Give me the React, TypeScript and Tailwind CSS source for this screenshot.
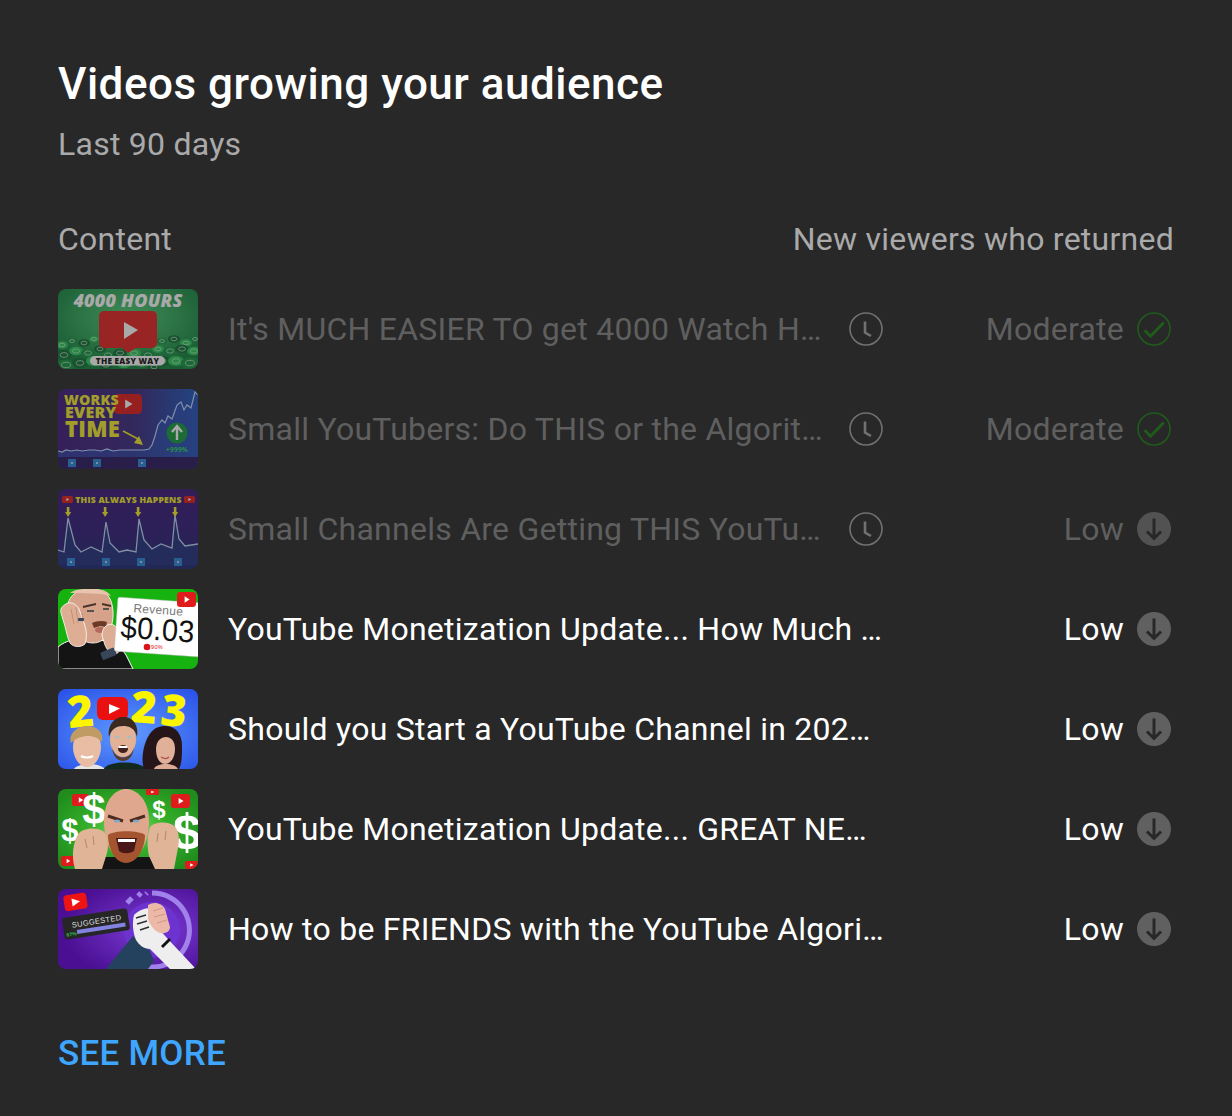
import type { ReactNode } from "react";

type Status = "Moderate" | "Low";

type Video = {
  title: string;
  status: Status;
  pending?: boolean;
  thumb: ReactNode;
};

const thumbFont = "'Open Sans', 'Liberation Sans', sans-serif";

function YtButton({ x, y, w, h }: { x: number; y: number; w: number; h: number }) {
  return (
    <g>
      <rect x={x} y={y} width={w} height={h} rx={h * 0.22} fill="#e01b1b" />
      <polygon
        points={`${x + w * 0.4},${y + h * 0.28} ${x + w * 0.66},${y + h * 0.5} ${x + w * 0.4},${y + h * 0.72}`}
        fill="#fff"
      />
    </g>
  );
}

function Dollar({ x, y, size }: { x: number; y: number; size: number }) {
  return (
    <text x={x} y={y} fontSize={size} fontWeight={700} fill="#fff" textAnchor="middle" fontFamily="'Liberation Sans', sans-serif">
      $
    </text>
  );
}

function Thumb4000() {
  const coins = [
    [4, 56, 6], [14, 52, 5], [26, 54, 6], [36, 50, 5], [104, 52, 5], [116, 50, 6], [128, 54, 6], [137, 50, 5],
    [6, 66, 8], [18, 62, 7], [30, 64, 7], [42, 60, 6], [100, 60, 6], [112, 62, 7], [124, 60, 7], [136, 62, 7],
    [8, 76, 9], [22, 74, 8], [36, 72, 8], [50, 66, 7], [62, 64, 7], [76, 64, 7], [90, 66, 7], [104, 72, 8], [118, 72, 8],
    [132, 74, 9], [48, 76, 7], [66, 75, 7], [84, 75, 7], [96, 78, 6],
  ];
  return (
    <svg viewBox="0 0 140 80" className="h-full w-full">
      <defs>
        <radialGradient id="g4000" cx="50%" cy="35%" r="65%">
          <stop offset="0%" stopColor="#4fd078" />
          <stop offset="100%" stopColor="#12803c" />
        </radialGradient>
      </defs>
      <rect width="140" height="80" fill="url(#g4000)" />
      <text x="70" y="18" fontSize="18" fontWeight={800} fontStyle="italic" fill="#fff" textAnchor="middle" fontFamily={thumbFont}>
        4000 HOURS
      </text>
      {coins.map(([x, y, r], i) => (
        <g key={i}>
          <ellipse cx={x} cy={y} rx={r} ry={r * 0.62} fill={i % 3 === 0 ? "#2ac95a" : i % 3 === 1 ? "#159443" : "#0f6f33"} />
          <ellipse cx={x} cy={y} rx={r * 0.5} ry={r * 0.3} fill="none" stroke="#c8ecd0" strokeWidth="0.7" />
        </g>
      ))}
      <path d="M46 22h48a5 5 0 0 1 5 5v27a5 5 0 0 1-5 5H78l-8 5-6-5H46a5 5 0 0 1-5-5V27a5 5 0 0 1 5-5z" fill="#e32222" />
      <polygon points="66,33 80,41 66,50" fill="#fff" />
      <rect x="32" y="67" width="75" height="9.5" rx="4.7" fill="#fff" />
      <text x="69.5" y="75" fontSize="8.2" fontWeight={800} fill="#111" textAnchor="middle" fontFamily={thumbFont}>
        THE EASY WAY
      </text>
    </svg>
  );
}

function ThumbWorks() {
  return (
    <svg viewBox="0 0 140 80" className="h-full w-full">
      <defs>
        <linearGradient id="gWorks" x1="0" x2="1" y1="0" y2="0">
          <stop offset="0%" stopColor="#401a7c" />
          <stop offset="55%" stopColor="#3a2a80" />
          <stop offset="100%" stopColor="#1f57bd" />
        </linearGradient>
      </defs>
      <rect width="140" height="80" fill="url(#gWorks)" />
      <rect y="68" width="140" height="12" fill="#2a1660" />
      <path d="M0 62l4 1 4-2 5 1 6-1 5 1 7-1 6 0 6 1 6-2 6 2 7-1 9 0 8 0 7 0 5-1 3-4 3-9 3-11 4-5 3 3 3-7 4 3 5-14 4-3 3 8 3-5 4 3 4-16 3 3 3-4 2-4V68H0z" fill="#2b4fb8" opacity="0.6" />
      <path d="M0 62l4 1 4-2 5 1 6-1 5 1 7-1 6 0 6 1 6-2 6 2 7-1 9 0 8 0 7 0 5-1 3-4 3-9 3-11 4-5 3 3 3-7 4 3 5-14 4-3 3 8 3-5 4 3 4-16 3 3 3-4 2-4" fill="none" stroke="#b9d4ff" strokeWidth="1.2" />
      <YtButton x={56} y={5} w={28} h={20} />
      <g fontFamily={thumbFont} fontWeight={800} fill="#f5ec2a">
        <text x="6" y="16" fontSize="14.2">WORKS</text>
        <text x="7" y="29" fontSize="16">EVERY</text>
        <text x="7" y="48" fontSize="22">TIME</text>
      </g>
      <path d="M65 42l17 9" stroke="#f5ec2a" strokeWidth="1.6" fill="none" />
      <polygon points="85,56 76,54 81,47" fill="#f5ec2a" />
      <circle cx="119" cy="44" r="10.5" fill="#159a3c" />
      <path d="M119 51V38M114 43l5-6 5 6" stroke="#fff" strokeWidth="2.4" fill="none" />
      <text x="119" y="63" fontSize="6.5" fontWeight={700} fill="#28d45a" textAnchor="middle" fontFamily={thumbFont}>
        +999%
      </text>
      {[10, 35, 80].map((x) => (
        <g key={x}>
          <rect x={x} y={70} width="8" height="8" fill="#2b82d9" />
          <rect x={x + 3.2} y={73.2} width="1.6" height="1.6" fill="#fff" />
        </g>
      ))}
    </svg>
  );
}

function ThumbAlways() {
  const xs = [10, 47, 80, 117];
  return (
    <svg viewBox="0 0 140 80" className="h-full w-full">
      <defs>
        <linearGradient id="gAlways" x1="0" x2="0" y1="0" y2="1">
          <stop offset="0%" stopColor="#3a1778" />
          <stop offset="55%" stopColor="#301c78" />
          <stop offset="100%" stopColor="#1c2a74" />
        </linearGradient>
      </defs>
      <rect width="140" height="80" fill="url(#gAlways)" />
      <path d="M0 61l6 2 4-34 7 27 6 7 10-5 11 5 4-30 4 21 9 9 8-2 9 2 3-33 5 21 8 9 9-5 11 4 3-33 4 24 6 7 13-2v21H0z" fill="#22307f" />
      <path d="M0 61l6 2 4-34 7 27 6 7 10-5 11 5 4-30 4 21 9 9 8-2 9 2 3-33 5 21 8 9 9-5 11 4 3-33 4 24 6 7 13-2" fill="none" stroke="#bcd0f5" strokeWidth="1.3" />
      <YtButton x={4} y={7} w={11} h={7} />
      <YtButton x={126} y={7} w={11} h={7} />
      <text x="70.5" y="14" fontSize="8.6" fontWeight={800} fill="#f5ec2a" textAnchor="middle" fontFamily={thumbFont}>
        THIS ALWAYS HAPPENS
      </text>
      {xs.map((x) => (
        <g key={x}>
          <rect x={x - 1.2} y={18} width="2.6" height="6" fill="#f5ec2a" />
          <polygon points={`${x - 3},23 ${x + 3.2},23 ${x + 0.1},28`} fill="#f5ec2a" />
        </g>
      ))}
      {[9, 44, 79, 116].map((x) => (
        <g key={x}>
          <rect x={x} y={69} width="8" height="8" fill="#2b82d9" />
          <rect x={x + 3.2} y={72.2} width="1.6" height="1.6" fill="#fff" />
        </g>
      ))}
    </svg>
  );
}

function ThumbRevenue() {
  return (
    <svg viewBox="0 0 140 80" className="h-full w-full">
      <rect width="140" height="80" fill="#16b20f" />
      <path d="M0 58c8-7 20-9 30-8l20 2c8 2 14 8 18 14l7 14H0z" fill="#141414" stroke="#fff" strokeWidth="1" />
      <path d="M9 22C9 6 20 0 33 0c14 0 21 7 22 22 1 16-6 32-20 32C19 54 9 38 9 22z" fill="#d6a38a" stroke="#fff" strokeWidth="0.8" />
      <path d="M12 4C17 0 24 0 33 0c10 0 16 1 20 7-9-3-30-3-41-3z" fill="#e8c3ad" />
      <path d="M25 18l13-3M44 15l9 2" stroke="#4a3429" strokeWidth="1.8" />
      <path d="M29 22h7M45 20h6" stroke="#2c3a40" strokeWidth="1.6" />
      <path d="M34 34c4-2 10-3 15-1l-1 5-6-1-6 2z" fill="#6d3a28" />
      <ellipse cx="42" cy="41" rx="5" ry="3" fill="#b46a5d" />
      <path d="M8 15c5-3 10 0 13 5l5 14c3 8 3 14 1 21-5 4-12 3-15-1-3-6-4-14-6-20l-3-10c-1-4 1-7 5-9z" fill="#deae94" stroke="#fff" strokeWidth="0.8" />
      <path d="M48 37c4-3 9-2 11 3l4 16c0 5-2 8-6 9-5 0-8-4-10-9l-3-9c0-4 1-8 4-10z" fill="#deae94" stroke="#fff" strokeWidth="0.8" />
      <path d="M18 18l2 16M13 20l3 15M24 24l1 9" stroke="#b5836a" strokeWidth="0.7" />
      <rect x="43" y="61" width="15" height="8" rx="1.5" transform="rotate(-22 50 65)" fill="#39465a" />
      <rect x="20" y="29" width="6" height="3" rx="1" fill="#39465a" />
      <g transform="rotate(4 100 38)">
        <rect x="58" y="11" width="90" height="54" rx="2" fill="#fff" stroke="#bbb" strokeWidth="0.5" />
      </g>
      <text x="100" y="25" fontSize="12" fill="#777" textAnchor="middle" fontFamily="'Liberation Sans', sans-serif" transform="rotate(4 100 25)">
        Revenue
      </text>
      <text x="99" y="51" fontSize="31" fill="#111" textAnchor="middle" fontFamily="'Liberation Sans', sans-serif" transform="rotate(4 99 51)" textLength="74" lengthAdjust="spacingAndGlyphs">
        $0.03
      </text>
      <circle cx="89" cy="58" r="3.3" fill="#d8141a" />
      <text x="99" y="60" fontSize="5.5" fill="#d8141a" textAnchor="middle" fontFamily="'Liberation Sans', sans-serif">
        90%
      </text>
      <YtButton x={119} y={3} w={19} h={15} />
    </svg>
  );
}

function Thumb2023() {
  return (
    <svg viewBox="0 0 140 80" className="h-full w-full">
      <defs>
        <radialGradient id="g2023" cx="50%" cy="55%" r="70%">
          <stop offset="0%" stopColor="#5f9bff" />
          <stop offset="100%" stopColor="#2a53e8" />
        </radialGradient>
      </defs>
      <rect width="140" height="80" fill="url(#g2023)" />
      <g fontFamily={thumbFont} fontWeight={800} fill="#fbf500" fontSize="44">
        <text x="10" y="38" transform="rotate(-6 22 26)">2</text>
        <text x="73" y="34" transform="rotate(4 86 20)">2</text>
        <text x="103" y="37" transform="rotate(6 115 22)">3</text>
      </g>
      <rect x="39" y="8" width="31" height="23" rx="6" fill="#ea1010" />
      <polygon points="51,15 62,19.5 51,25" fill="#fff" />
      <path d="M46 80c3-8 35-9 42 0z" fill="#12291f" />
      <path d="M16 80c2-5 22-8 30-1v1z" fill="#e4e4e4" />
      <ellipse cx="65" cy="50" rx="13" ry="18" fill="#e2b196" />
      <path d="M51 48c-2-13 7-21 15-20 9 0 15 8 13 20-2-9-8-11-14-11s-12 3-14 11z" fill="#3a2a20" />
      <path d="M54 58c3 14 19 14 22 0-1 9-5 14-11 14s-10-5-11-14z" fill="#5b3c2a" />
      <ellipse cx="65" cy="60" rx="5" ry="4" fill="#40201c" />
      <rect x="60.5" y="57" width="9" height="2" fill="#fff" />
      <ellipse cx="59" cy="48" rx="2" ry="1.3" fill="#9ec0c8" />
      <ellipse cx="71" cy="48" rx="2" ry="1.3" fill="#9ec0c8" />
      <path d="M15 58c0-10 6-16 14-16s14 6 14 16c0 10-6 20-14 20s-14-10-14-20z" fill="#e8bda4" />
      <path d="M13 54c-3-10 7-17 16-17 10 0 17 6 15 16-6-7-20-9-31 1z" fill="#c09b64" />
      <path d="M23 67c3 2 9 2 12 0" stroke="#fff" strokeWidth="2.2" fill="none" />
      <path d="M86 80c-3-9-1-20 2-28 4-10 10-15 19-15 11 0 17 8 17 20 0 9 0 17-3 23z" fill="#26161a" />
      <path d="M98 60c0-8 5-12 10-12s9 4 9 12c0 8-4 15-10 15s-9-7-9-15z" fill="#e0b098" />
      <path d="M96 80c2-6 20-7 24 0z" fill="#dcad94" />
      <path d="M103 68c3 2 6 2 8 0" stroke="#b04f4f" strokeWidth="1.4" fill="none" />
    </svg>
  );
}

function ThumbGreat() {
  return (
    <svg viewBox="0 0 140 80" className="h-full w-full">
      <defs>
        <radialGradient id="gGreat" cx="50%" cy="50%" r="62%">
          <stop offset="0%" stopColor="#7ee06a" />
          <stop offset="45%" stopColor="#35b02a" />
          <stop offset="100%" stopColor="#1f8c1c" />
        </radialGradient>
      </defs>
      <rect width="140" height="80" fill="url(#gGreat)" />
      <YtButton x={14} y={5} w={17} h={12} />
      <YtButton x={113} y={5} w={19} h={14} />
      <YtButton x={88} y={0} w={13} h={6} />
      <YtButton x={3} y={67} w={14} h={10} />
      <YtButton x={127} y={72} w={13} h={8} />
      <Dollar x={36} y={35} size={42} />
      <Dollar x={12} y={52} size={31} />
      <Dollar x={101} y={29} size={24} />
      <Dollar x={129} y={60} size={50} />
      <path d="M40 80l6-12h50l6 12z" fill="#141414" />
      <path d="M46 32c0-22 12-32 22-32s23 10 23 32c0 22-10 40-23 40S46 54 46 32z" fill="#dfa78d" />
      <path d="M50 27l15 5M87 27l-15 5" stroke="#4a2c20" strokeWidth="3" />
      <ellipse cx="59" cy="32" rx="3" ry="1.5" fill="#7fa9c6" />
      <ellipse cx="78" cy="32" rx="3" ry="1.5" fill="#7fa9c6" />
      <path d="M50 46c6-5 31-5 37 0 0 14-8 28-19 28S50 60 50 46z" fill="#a4552f" />
      <path d="M58 49h21l-3 13c-5 3-11 3-15 0z" fill="#4a1718" />
      <path d="M60 50h17v3H60z" fill="#fff" />
      <path d="M21 44c5-5 17-6 24-2 5 4 6 14 4 22l-5 16H17c-4-12-2-28 4-36z" fill="#e0b496" />
      <path d="M92 38c4-5 16-6 23-2 7 5 7 16 4 28l-3 16H97l-6-13c-2-10-2-21 1-29z" fill="#e0b496" />
      <path d="M27 50l2 9M35 47l1 9M100 44l-1 9M108 42l-1 9" stroke="#b9866b" strokeWidth="1" />
    </svg>
  );
}

function ThumbFriends() {
  return (
    <svg viewBox="0 0 140 80" className="h-full w-full">
      <defs>
        <radialGradient id="gFriends" cx="68%" cy="50%" r="65%">
          <stop offset="0%" stopColor="#7b3dd8" />
          <stop offset="100%" stopColor="#4a0f92" />
        </radialGradient>
      </defs>
      <rect width="140" height="80" fill="url(#gFriends)" />
      <circle cx="94" cy="41" r="28" fill="#6d33d0" />
      <path d="M94 4a37 37 0 1 1-30 58" fill="none" stroke="#a182ea" strokeWidth="5" />
      <path d="M69 14l5-5M80 7l3-3M88 5l1-1" stroke="#a182ea" strokeWidth="5" />
      <path d="M48 80l27-33 17 15 4 10-6 8z" fill="#24415e" />
      <path d="M76 26c4-4 10-7 16-7l8 20 8 9 30 32h-26L92 60c-6 0-11-4-14-9-3-7-4-17-2-25z" fill="#eeeeee" />
      <path d="M90 16c6-4 14-2 17 4l5 18c0 5-5 7-10 6-6-2-10-8-12-14z" fill="#ecb9a8" />
      <path d="M95 22l10-3M96 28l11-3M99 34l10-3" stroke="#c98d7c" strokeWidth="0.8" />
      <path d="M78 29l10-3M79 35l10-3M82 41l9-3" stroke="#333" strokeWidth="1.8" />
      <path d="M104 58l8-8" stroke="#111" strokeWidth="3" />
      <g transform="rotate(-9 38 35)">
        <rect x="5" y="24" width="66" height="22" rx="3" fill="#262626" />
        <text x="14" y="35" fontSize="7.6" fill="#dddddd" fontFamily="'Liberation Sans', sans-serif">
          SUGGESTED
        </text>
        <text x="7" y="43" fontSize="5" fontWeight={700} fill="#2ec44a" fontFamily="'Liberation Sans', sans-serif">
          67%
        </text>
        <rect x="18" y="38" width="49" height="4" fill="#8282e0" />
      </g>
      <g transform="rotate(-9 17 13)">
        <rect x="6" y="5" width="23" height="16" rx="3.5" fill="#ee1414" />
        <polygon points="14,9 22,13 14,17" fill="#fff" />
      </g>
    </svg>
  );
}

const videos: Video[] = [
  { title: "It's MUCH EASIER TO get 4000 Watch Hours", status: "Moderate", pending: true, thumb: <Thumb4000 /> },
  { title: "Small YouTubers: Do THIS or the Algorithm", status: "Moderate", pending: true, thumb: <ThumbWorks /> },
  { title: "Small Channels Are Getting THIS YouTube Bug", status: "Low", pending: true, thumb: <ThumbAlways /> },
  { title: "YouTube Monetization Update... How Much Money", status: "Low", thumb: <ThumbRevenue /> },
  { title: "Should you Start a YouTube Channel in 2023? Yes", status: "Low", thumb: <Thumb2023 /> },
  { title: "YouTube Monetization Update... GREAT NEWS", status: "Low", thumb: <ThumbGreat /> },
  { title: "How to be FRIENDS with the YouTube Algorithm", status: "Low", thumb: <ThumbFriends /> },
];

function ClockIcon() {
  return (
    <svg viewBox="0 0 34 34" className="mr-px ml-[26px] h-[34px] w-[34px] shrink-0" fill="none" stroke="#717171">
      <circle cx="17" cy="17" r="16" strokeWidth="1.6" />
      <path d="M16 9.5v11l6 3.5" strokeWidth="2.6" />
    </svg>
  );
}

function StatusIcon({ status, pending }: { status: Status; pending?: boolean }) {
  if (status === "Moderate") {
    return (
      <svg viewBox="0 0 34 34" className="h-[34px] w-[34px]" fill="none" stroke="#1f5c1c">
        <circle cx="17" cy="17" r="16" strokeWidth="1.6" />
        <path d="M7.6 18.2l6 6L26.7 10.5" strokeWidth="3" />
      </svg>
    );
  }
  return (
    <svg viewBox="0 0 34 34" className="h-[34px] w-[34px]">
      <circle cx="17" cy="17" r="17" fill={pending ? "#525252" : "#606060"} />
      <path d="M17 6.5v19.5M10 19.5l7 7 7-7" fill="none" stroke="#282828" strokeWidth="3" />
    </svg>
  );
}

function VideoRow({ video }: { video: Video }) {
  return (
    <div className="flex h-20 items-center">
      <div className={`h-20 w-[140px] shrink-0 overflow-hidden rounded-lg ${video.pending ? "opacity-60" : ""}`}>
        {video.thumb}
      </div>
      <div className="ml-[30px] flex w-[656px] shrink-0 items-center">
        <span className={`min-w-0 flex-1 truncate ${video.pending ? "text-[#5f5f5f]" : "text-white"}`}>
          {video.title}
        </span>
        {video.pending && <ClockIcon />}
      </div>
      <div className="flex flex-1 items-center justify-end gap-[13px] pr-[3px]">
        <span className={video.pending ? "text-[#5f5f5f]" : "text-white"}>{video.status}</span>
        <StatusIcon status={video.status} pending={video.pending} />
      </div>
    </div>
  );
}

export default function App() {
  return (
    <div
      className="h-[1116px] w-[1232px] bg-[#282828] px-[58px] pt-[58px] text-[32px] leading-10 tracking-[0.25px]"
      style={{ fontFamily: "Roboto, 'Liberation Sans', sans-serif" }}
    >
      <h1 className="text-[44px] leading-[52px] font-medium tracking-[0.5px] text-white">Videos growing your audience</h1>
      <p className="mt-[14px] text-[#aaaaaa]">Last 90 days</p>
      <div className="mt-[55px] flex justify-between text-[#aaaaaa]">
        <span>Content</span>
        <span>New viewers who returned</span>
      </div>
      <div className="mt-[30px] flex flex-col gap-5">
        {videos.map((video) => (
          <VideoRow key={video.title} video={video} />
        ))}
      </div>
      <div className="mt-[65px] text-[35px] font-medium text-[#3ea6ff]">SEE MORE</div>
    </div>
  );
}
